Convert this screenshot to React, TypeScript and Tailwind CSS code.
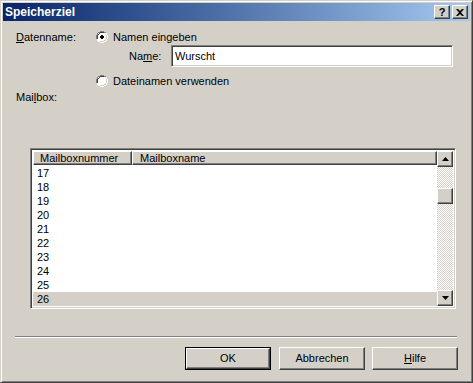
import React from 'react';

const raised =
  'border border-t-white border-l-white border-r-[#404040] border-b-[#404040] shadow-[inset_-1px_-1px_#808080]';
const sunken =
  'border border-t-[#808080] border-l-[#808080] border-r-white border-b-white shadow-[inset_1px_1px_#404040,inset_-1px_-1px_#d4d0c8]';

const rows = ['17', '18', '19', '20', '21', '22', '23', '24', '25', '26'];

function Radio({ checked }: { checked?: boolean }) {
  return (
    <svg width="12" height="12" viewBox="0 0 12 12" className="shrink-0">
      <path d="M4 0h4v1h2v1h1v2h1v4h-1v2h-1v1h-2v1h-4v-1h-2v-1h-1v-2h-1v-4h1v-2h1v-1h2z" fill="#ffffff" />
      <path d="M4 0h4v1h2v1h-2v-1h-4v1h-2v2h-1v4h-1v-4h1v-2h1v-1h2z" fill="#808080" />
      <path d="M4 1h4v1h-4v1h-1v-1h-1v1h1v1h-1v4h-1v-4h1v-2h2z" fill="#404040" />
      <path d="M10 2h1v2h1v4h-1v2h-1v1h-2v1h-4v-1h4v-1h2v-2h1v-4h-1z" fill="#ffffff" />
      <path d="M10 3h0v1h1v4h-1v2h-2v1h-4v-1h4v-1h1v-1h1v-4h-1z" fill="#d4d0c8" />
      {checked && <path d="M5 4h2v1h1v2h-1v1h-2v-1h-1v-2h1z" fill="#000000" />}
    </svg>
  );
}

function Arrow({ down }: { down?: boolean }) {
  return (
    <svg width="7" height="4" viewBox="0 0 7 4">
      <path d={down ? 'M0 0h7l-3.5 4z' : 'M0 4h7l-3.5 -4z'} fill="#000000" />
    </svg>
  );
}

export default function App() {
  return (
    <div
      className="w-[473px] h-[383px] bg-[#d4d0c8] border border-t-[#d4d0c8] border-l-[#d4d0c8] border-r-[#404040] border-b-[#404040] shadow-[inset_1px_1px_#ffffff,inset_-1px_-1px_#808080] p-[2px] flex flex-col text-[11px] text-black"
      style={{ fontFamily: '"Liberation Sans", Arial, sans-serif' }}
    >
      {/* Title bar */}
      <div className="h-[18px] shrink-0 flex items-center pl-[2px] pr-[2px] bg-gradient-to-r from-[#0a246a] to-[#a6caf0]">
        <span className="flex-1 text-white font-bold text-[12px] leading-none">Speicherziel</span>
        <div className={`w-[16px] h-[14px] bg-[#d4d0c8] ${raised} flex items-center justify-center font-bold text-[11px] leading-none`}>
          ?
        </div>
        <div className={`ml-[2px] w-[16px] h-[14px] bg-[#d4d0c8] ${raised} flex items-center justify-center`}>
          <svg width="8" height="7" viewBox="0 0 8 7">
            <path d="M0 0h2l2 2 2-2h2l-3 3.5 3 3.5h-2l-2-2-2 2h-2l3-3.5z" fill="#000000" />
          </svg>
        </div>
      </div>

      {/* Content */}
      <div className="flex flex-col pl-[13px]">
        <div className="mt-[10px] h-[12px] flex items-center">
          <span className="w-[80px]">
            <span className="underline">D</span>atenname:
          </span>
          <Radio checked />
          <span className="ml-[5px]">Namen eingeben</span>
        </div>

        <div className="mt-[2px] h-[22px] flex items-center pl-[113px]">
          <span className="w-[42px]">
            Na<span className="underline">m</span>e:
          </span>
          <div className={`w-[282px] h-[22px] bg-white ${sunken} flex items-center pl-[3px]`}>Wurscht</div>
        </div>

        <div className="mt-[8px] h-[12px] flex items-center pl-[80px]">
          <Radio />
          <span className="ml-[5px]">Dateinamen verwenden</span>
        </div>

        <div className="mt-[4px] h-[13px] leading-[13px]">
          Mai<span className="underline">l</span>box:
        </div>

        {/* List view */}
        <div className={`mt-[44px] ml-[14px] w-[426px] h-[161px] bg-white ${sunken} p-[2px] flex`}>
          <div className="flex-1 flex flex-col">
            <div className="h-[16px] flex bg-[#d4d0c8]">
              <div className={`w-[99px] ${raised} pl-[6px] flex items-center leading-none`}>Mailboxnummer</div>
              <div className={`flex-1 ${raised} pl-[7px] flex items-center leading-none`}>Mailboxname</div>
            </div>
            <div className="pt-[1px] flex flex-col">
              {rows.map((r) => (
                <div
                  key={r}
                  className={`h-[14px] pl-[4px] flex items-center leading-none ${r === '26' ? 'bg-[#d4d0c8]' : ''}`}
                >
                  {r}
                </div>
              ))}
            </div>
          </div>
          {/* Scrollbar */}
          <div className="w-[16px] flex flex-col">
            <div className={`h-[16px] bg-[#d4d0c8] ${raised} flex items-center justify-center`}>
              <Arrow />
            </div>
            <div className="h-[21px] bg-[image:repeating-conic-gradient(#d4d0c8_0%_25%,#ffffff_0%_50%)] bg-[length:2px_2px]" />
            <div className={`h-[16px] bg-[#d4d0c8] ${raised}`} />
            <div className="flex-1 bg-[image:repeating-conic-gradient(#d4d0c8_0%_25%,#ffffff_0%_50%)] bg-[length:2px_2px]" />
            <div className={`h-[16px] bg-[#d4d0c8] ${raised} flex items-center justify-center`}>
              <Arrow down />
            </div>
          </div>
        </div>

        {/* Separator */}
        <div className="mt-[27px] -ml-[1px] w-[442px] h-[2px] border-t border-t-[#808080] border-b border-b-white" />

        {/* Buttons */}
        <div className="mt-[9px] flex pl-[169px]">
          <div className="w-[86px] h-[23px] border border-black">
            <div className={`w-full h-full ${raised} flex items-center justify-center`}>OK</div>
          </div>
          <div className={`ml-[8px] w-[86px] h-[23px] ${raised} flex items-center justify-center`}>Abbrechen</div>
          <div className={`ml-[7px] w-[86px] h-[23px] ${raised} flex items-center justify-center`}>
            <span>
              <span className="underline">H</span>ilfe
            </span>
          </div>
        </div>
      </div>
    </div>
  );
}
